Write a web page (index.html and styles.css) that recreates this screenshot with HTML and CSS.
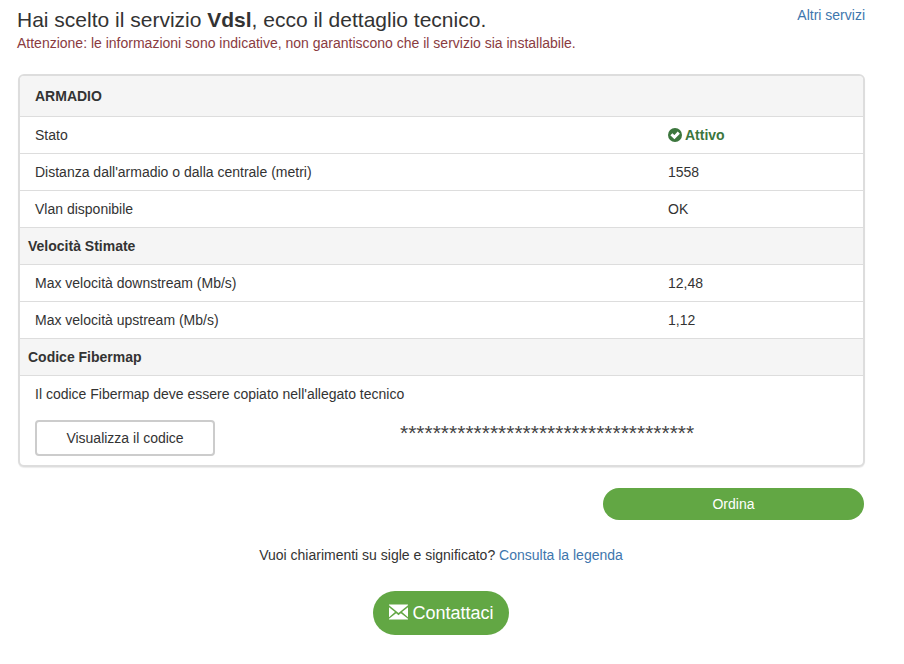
FILE: index.html
```
<!DOCTYPE html>
<html lang="it">
<head>
<meta charset="utf-8">
<title>Dettaglio tecnico</title>
<link rel="stylesheet" href="styles.css">
</head>
<body>
<div class="page">
  <header class="head">
    <div class="intro">
      <h1 class="title">Hai scelto il servizio <b>Vdsl</b>, ecco il dettaglio tecnico.</h1>
      <p class="warn">Attenzione: le informazioni sono indicative, non garantiscono che il servizio sia installabile.</p>
    </div>
    <a class="link other" href="#">Altri servizi</a>
  </header>
  <section class="panel">
    <div class="row heading"><b>ARMADIO</b></div>
    <div class="row"><span class="label">Stato</span><span class="value active"><svg class="check" viewBox="0 0 14 14" width="14" height="14"><circle cx="7" cy="7" r="7" fill="#3c763d"/><path d="M3.4 6.2 6.4 9.2 10.8 4.6" fill="none" stroke="#fff" stroke-width="3"/></svg> Attivo</span></div>
    <div class="row"><span class="label">Distanza dall'armadio o dalla centrale (metri)</span><span class="value">1558</span></div>
    <div class="row"><span class="label">Vlan disponibile</span><span class="value">OK</span></div>
    <div class="row section"><b>Velocità Stimate</b></div>
    <div class="row"><span class="label">Max velocità downstream (Mb/s)</span><span class="value">12,48</span></div>
    <div class="row"><span class="label">Max velocità upstream (Mb/s)</span><span class="value">1,12</span></div>
    <div class="row section"><b>Codice Fibermap</b></div>
    <div class="code">
      <p class="code-text">Il codice Fibermap deve essere copiato nell'allegato tecnico</p>
      <div class="code-row">
        <button class="show" type="button">Visualizza il codice</button>
        <span class="stars">************************************</span>
      </div>
    </div>
  </section>
  <div class="order-row"><button class="order" type="button">Ordina</button></div>
  <p class="legend">Vuoi chiarimenti su sigle e significato? <a class="link" href="#">Consulta la legenda</a></p>
  <div class="contact-row">
    <a class="contact" href="#"><svg class="mail" viewBox="0 0 20 16" width="19" height="16"><path d="M0 0H20V1L10 9 0 1Z" fill="#fff"/><path d="M0 3V13.6L6.3 8ZM20 3V13.6L13.7 8Z" fill="#fff"/><path d="M0 16H20V15L12.5 9.4 10 11.4 7.5 9.4 0 15Z" fill="#fff"/></svg>Contattaci</a>
  </div>
</div>
</body>
</html>
```
FILE: styles.css
```
* { box-sizing: border-box; }
html, body { margin: 0; padding: 0; background: #fff; }
body {
  font-family: "Liberation Sans", Arial, sans-serif;
  font-size: 14px;
  line-height: 20px;
  color: #333;
}
.page { width: 904px; height: 664px; padding: 0 39px 0 18px; overflow: hidden; }
.head { display: flex; justify-content: space-between; align-items: flex-start; height: 74px; padding-top: 7px; }
.intro { margin-left: -1px; }
.title { margin: 0; font-size: 21px; line-height: 26px; font-weight: 400; }
.warn { margin: 0; font-size: 14px; line-height: 20px; color: #8a3b3f; }
.link { color: #3e76ad; text-decoration: none; }
.other { font-size: 14px; margin-top: -2px; }
.panel { width: 847px; border: 2px solid #ddd; border-radius: 6px; overflow: hidden; background: #fff; box-shadow: 0 1px 1px rgba(0,0,0,.08); }
.row { display: flex; height: 37px; align-items: center; padding-left: 15px; border-top: 1px solid #ddd; font-size: 14px; }
.heading { height: 40px; border-top: 0; background: #f5f5f5; }
.heading b, .section b { color: #333; }
.section { padding-left: 8px; background: #f5f5f5; }
.label { width: 633px; flex: none; }
.value { display: inline-flex; align-items: center; }
.active { color: #3c763d; font-weight: 700; gap: 3px; }
.code { border-top: 1px solid #ddd; padding: 8px 15px 8px; height: 90px; }
.code-text { margin: 0; }
.code-row { display: flex; align-items: flex-start; margin-top: 16px; }
.show { width: 180px; height: 36px; flex: none; background: #fff; border: 2px solid #ccc; border-radius: 4px; font: 14px/20px "Liberation Sans", Arial, sans-serif; color: #333; padding: 0; }
.stars { margin: 3px 0 0 185px; font-size: 21px; line-height: 20px; color: #444; }
.order-row { display: flex; justify-content: flex-end; width: 846px; margin-top: 21px; }
.order { width: 261px; height: 32px; border: 0; border-radius: 16px; background: #62a744; color: #fff; font: 14px/20px "Liberation Sans", Arial, sans-serif; padding: 0; }
.legend { margin: 25px 0 0; width: 846px; text-align: center; }
.contact-row { display: flex; justify-content: center; width: 846px; margin-top: 26px; }
.contact { display: inline-flex; align-items: center; gap: 4px; height: 44px; padding: 0 15px 0 16px; border-radius: 22px; background: #62a744; color: #fff; font-size: 18px; text-decoration: none; }
.mail { margin-top: -3px; }
```
